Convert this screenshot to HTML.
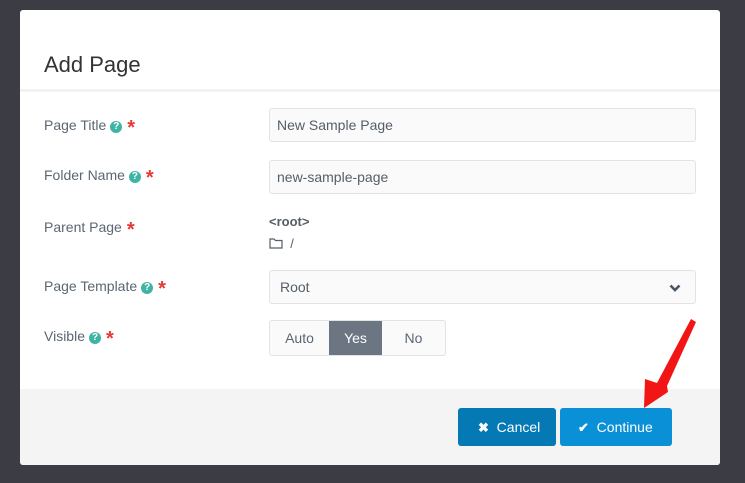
<!DOCTYPE html>
<html><head><style>
body{margin:0;width:745px;height:483px;background:#3c3d44;font-family:"Liberation Sans",sans-serif;position:relative;overflow:hidden}
.modal{position:absolute;left:20px;top:10px;width:700px;height:455px;background:#fff;border-radius:3px;overflow:hidden}
.hd{height:79px;border-bottom:3px solid #f2f2f2;position:relative}
.hd h1{position:absolute;left:24px;top:42px;margin:0;font-size:22px;font-weight:normal;color:#333}
.lbl{position:absolute;left:24px;font-size:14px;color:#5b6673}
.q{display:inline-block;width:12px;height:12px;border-radius:50%;background:#3fb3a4;color:#fff;font-size:10px;font-weight:bold;text-align:center;line-height:12px;vertical-align:1px;margin-left:4px}
.st{color:#e53935;font-size:20px;font-weight:bold;margin-left:5px;vertical-align:-4px}
.inp{position:absolute;left:249px;width:427px;height:34px;border:1px solid #e3e3e3;border-radius:3px;background:#fafafa;box-sizing:border-box;padding-left:7px;line-height:32px;font-size:14px;color:#555e68}
.ft{position:absolute;left:0;top:379px;width:700px;height:76px;background:#f4f4f4}
.btn{position:absolute;top:19px;height:38px;border-radius:3px;color:#fff;font-size:14px;line-height:38px;box-sizing:border-box}
.tg{position:absolute;left:249px;top:310px;height:36px;width:177px;border:1px solid #e3e3e3;border-radius:3px;background:#fafafa;box-sizing:border-box;font-size:14px;color:#5b6673}
.tg span{position:absolute;top:0;height:34px;line-height:34px;text-align:center}
</style></head><body>
<div class="modal">
<div class="hd"><h1>Add Page</h1></div>
<div class="lbl" style="top:107px">Page Title<span class="q">?</span><span class="st">*</span></div>
<div class="inp" style="top:98px">New Sample Page</div>
<div class="lbl" style="top:157px">Folder Name<span class="q">?</span><span class="st">*</span></div>
<div class="inp" style="top:150px">new-sample-page</div>
<div class="lbl" style="top:209px">Parent Page<span class="st">*</span></div>
<div style="position:absolute;left:249px;top:204px;font-size:13px;font-weight:bold;color:#555e68">&lt;root&gt;</div>
<div style="position:absolute;left:249px;top:226px;font-size:13px;color:#555e68"><svg width="14" height="12" viewBox="0 0 14 12" style="vertical-align:-1px"><path d="M1 2h4l1.5 1.5H13v7.5H1z" fill="none" stroke="#555e68" stroke-width="1.2"/></svg> &nbsp;/</div>
<div class="lbl" style="top:268px">Page Template<span class="q">?</span><span class="st">*</span></div>
<div class="inp" style="top:260px;padding-left:10px">Root<svg width="12" height="8" viewBox="0 0 12 8" style="position:absolute;right:14px;top:13px"><path d="M1.5 1.5L6 6l4.5-4.5" fill="none" stroke="#4a5563" stroke-width="2.6"/></svg></div>
<div class="lbl" style="top:318px">Visible<span class="q">?</span><span class="st">*</span></div>
<div class="tg"><span style="left:0;width:59px">Auto</span><span style="left:59px;width:53px;background:#6c7683;color:#fff">Yes</span><span style="left:112px;width:63px">No</span></div>
<div class="ft">
<div class="btn" style="left:438px;width:98px;background:#0579b3;padding-left:20px"><b style="font-size:13px">✖</b>&nbsp; Cancel</div>
<div class="btn" style="left:540px;width:112px;background:#0990d6;padding-left:18px"><b style="font-size:13px">✔</b>&nbsp; Continue</div>
</div>
</div>
<svg width="745" height="483" style="position:absolute;left:0;top:0">
<path d="M691 319 L696 322 L667 386 L668 392 L644 408 L645 379 L657 383 Z" fill="#f21515"/>
</svg>
</body></html>
